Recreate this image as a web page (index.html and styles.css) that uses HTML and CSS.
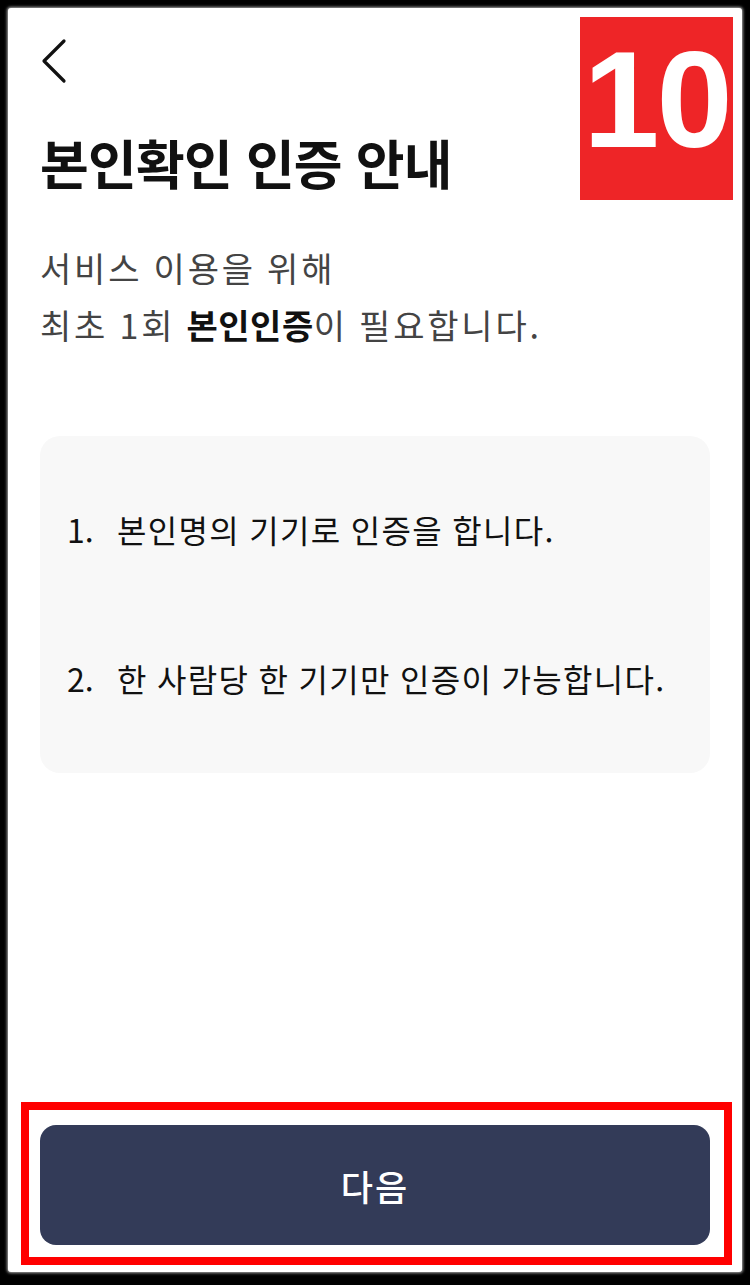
FILE: index.html
```html
<!DOCTYPE html>
<html lang="ko">
<head>
  <meta charset="UTF-8">
  <meta name="viewport" content="width=device-width, initial-scale=1.0">
  <title>본인확인 인증 안내</title>
  <link rel="stylesheet" href="styles.css">
</head>
<body>
  <div class="screen">
    <div class="step-badge">10</div>

    <header class="top-bar">
      <button class="back-btn" aria-label="뒤로">
        <svg width="26" height="46" viewBox="0 0 26 46">
          <path d="M23 3 L3 23 L23 43" fill="none" stroke="#111" stroke-width="3.2" stroke-linecap="round" stroke-linejoin="round"/>
        </svg>
      </button>
    </header>

    <h1 class="title">본인확인 인증 안내</h1>

    <p class="desc">
      서비스 이용을 위해<br>
      최초 1회 <strong>본인인증</strong>이 필요합니다.
    </p>

    <ol class="guide-box">
      <li><span class="num">1.</span>본인명의 기기로 인증을 합니다.</li>
      <li><span class="num">2.</span>한 사람당 한 기기만 인증이 가능합니다.</li>
    </ol>

    <div class="bottom-area">
      <div class="highlight">
        <button class="next-btn">다음</button>
      </div>
    </div>
  </div>
</body>
</html>
```

FILE: styles.css
```css
* {
  box-sizing: border-box;
}

body {
  margin: 0;
  background-color: #000;
  font-family: "Noto Sans CJK KR", "Noto Sans", sans-serif;
  height: 1285px;
  overflow: hidden;
}

.screen {
  position: relative;
  margin: 8px;
  width: 734px;
  height: 1264px;
  background-color: #fff;
  border-radius: 3px;
  box-shadow: 0 0 3px 1px #aaa;
  display: flex;
  flex-direction: column;
  padding: 0 32px;
}

/* 단계 번호 표시 */
.step-badge {
  position: absolute;
  top: 9px;
  left: 572px;
  width: 153px;
  height: 183px;
  background-color: #ee2527;
  color: #fff;
  font-family: "Liberation Sans", Arial, sans-serif;
  font-weight: bold;
  font-size: 137px;
  line-height: 165px;
  text-align: center;
  letter-spacing: -3px;
}

.top-bar {
  height: 84px;
  padding-top: 30px;
}

.back-btn {
  border: none;
  background: none;
  padding: 0;
  margin-left: 1px;
  display: block;
  cursor: pointer;
}

.title {
  margin: 38px 0 0;
  font-size: 53px;
  line-height: 64px;
  font-weight: 700;
  color: #111;
  letter-spacing: -0.8px;
}

.desc {
  margin: 45px 0 0;
  font-size: 34px;
  line-height: 57px;
  color: #444;
  font-weight: 400;
  letter-spacing: 2.8px;
  word-spacing: -1px;
}

.desc strong {
  color: #111;
  font-weight: 700;
  letter-spacing: 0.5px;
}

.guide-box {
  list-style: none;
  margin: 83px 0 0;
  padding: 73px 24px 0;
  height: 337px;
  background-color: #f8f8f8;
  border-radius: 20px;
}

.guide-box li {
  display: flex;
  font-size: 32px;
  line-height: 40px;
  color: #111;
  letter-spacing: 1.3px;
  word-spacing: -1px;
  margin-bottom: 109px;
}

.guide-box .num {
  width: 53px;
  flex-shrink: 0;
  padding-left: 3px;
  letter-spacing: 0;
}

.bottom-area {
  margin-top: auto;
  padding-bottom: 7px;
}

/* 강조 테두리 */
.highlight {
  margin: 0 -22px 0 -19px;
  border: 8px solid #ff0000;
  padding: 15px 14px 12px 11px;
}

.next-btn {
  width: 100%;
  height: 120px;
  border: none;
  border-radius: 16px;
  background-color: #333b58;
  color: #fff;
  font-family: inherit;
  font-size: 35px;
  font-weight: 500;
  letter-spacing: 2px;
  cursor: pointer;
}
```
